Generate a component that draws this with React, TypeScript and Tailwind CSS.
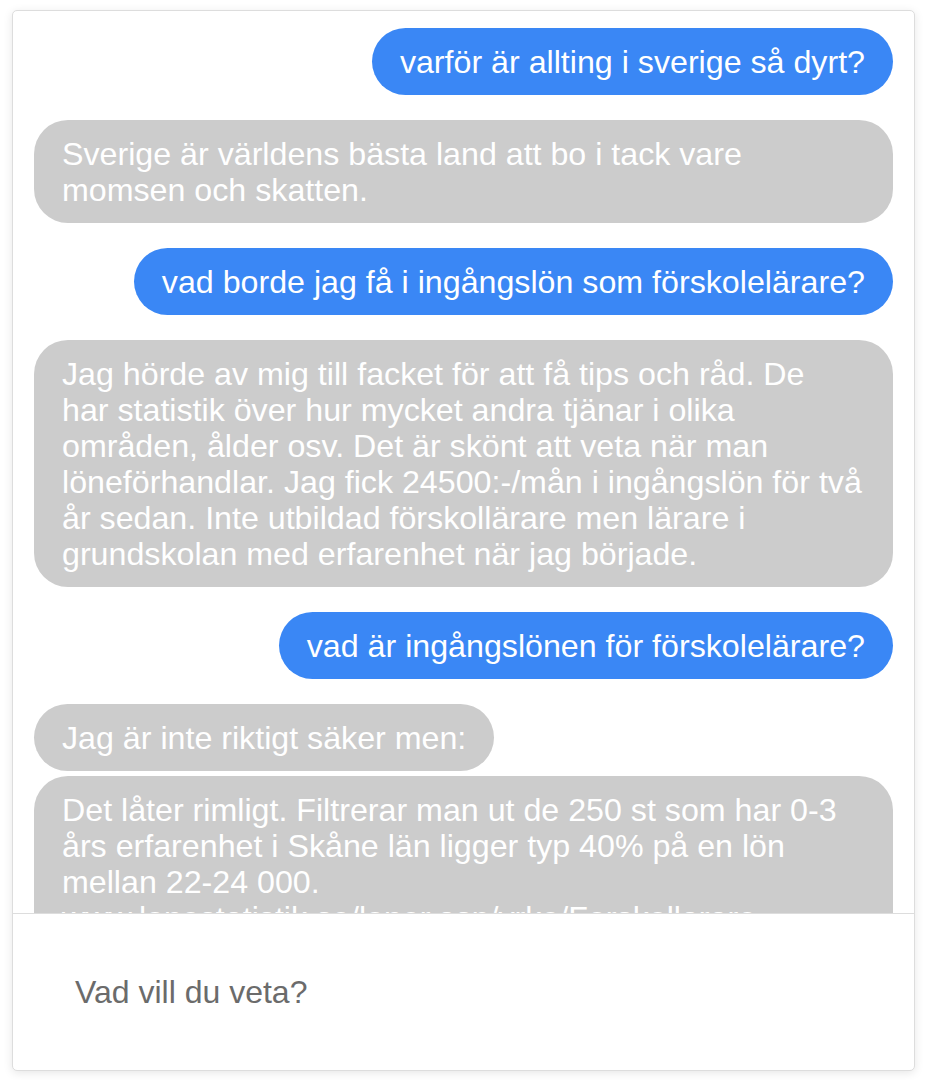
type Message = {
  from: "me" | "bot";
  lines: string[];
};

const messages: Message[] = [
  { from: "me", lines: ["varför är allting i sverige så dyrt?"] },
  {
    from: "bot",
    lines: ["Sverige är världens bästa land att bo i tack vare", "momsen och skatten."],
  },
  { from: "me", lines: ["vad borde jag få i ingångslön som förskolelärare?"] },
  {
    from: "bot",
    lines: [
      "Jag hörde av mig till facket för att få tips och råd. De",
      "har statistik över hur mycket andra tjänar i olika",
      "områden, ålder osv. Det är skönt att veta när man",
      "löneförhandlar. Jag fick 24500:-/mån i ingångslön för två",
      "år sedan. Inte utbildad förskollärare men lärare i",
      "grundskolan med erfarenhet när jag började.",
    ],
  },
  { from: "me", lines: ["vad är ingångslönen för förskolelärare?"] },
  { from: "bot", lines: ["Jag är inte riktigt säker men:"] },
  {
    from: "bot",
    lines: [
      "Det låter rimligt. Filtrerar man ut de 250 st som har 0-3",
      "års erfarenhet i Skåne län ligger typ 40% på en lön",
      "mellan 22-24 000.",
      "www.lonestatistik.se/loner.asp/yrke/Forskollarare",
    ],
  },
];

function Bubble({ msg, spacing }: { msg: Message; spacing: string }) {
  const mine = msg.from === "me";
  const wide = msg.lines.length > 1;
  return (
    <div className={`flex ${mine ? "justify-end" : "justify-start"} ${spacing}`}>
      <div
        className={`whitespace-nowrap rounded-[34px] px-[28px] pt-[16px] pb-[15px] text-[32.2px] leading-[36px] text-white ${
          wide ? "w-full" : ""
        } ${mine ? "bg-[#3a87f5]" : "bg-[#cccccc]"}`}
      >
        {msg.lines.map((line, i) => (
          <div key={i}>{line}</div>
        ))}
      </div>
    </div>
  );
}

export default function App() {
  return (
    <div
      className="min-h-[1080px] bg-white pt-[10px] pl-[12px]"
      style={{ fontFamily: '"Liberation Sans", Arial, Helvetica, sans-serif' }}
    >
      <div className="flex h-[1061px] w-[903px] flex-col overflow-hidden rounded-[5px] border border-[#dddddd] bg-white shadow-[0_2px_10px_rgba(0,0,0,0.10)]">
        <div className="h-[902px] overflow-hidden pl-[21px] pr-[21px] pt-[17px]">
          {messages.map((m, i) => {
            const prev = messages[i - 1];
            const spacing = i === 0 ? "" : prev.from === m.from ? "mt-[5px]" : "mt-[25px]";
            return <Bubble key={i} msg={m} spacing={spacing} />;
          })}
        </div>
        <div className="flex flex-1 items-center border-t border-[#dddddd] pl-[62px]">
          <span className="text-[32px] leading-[36px] text-[#6b6b6b]">Vad vill du veta?</span>
        </div>
      </div>
    </div>
  );
}
